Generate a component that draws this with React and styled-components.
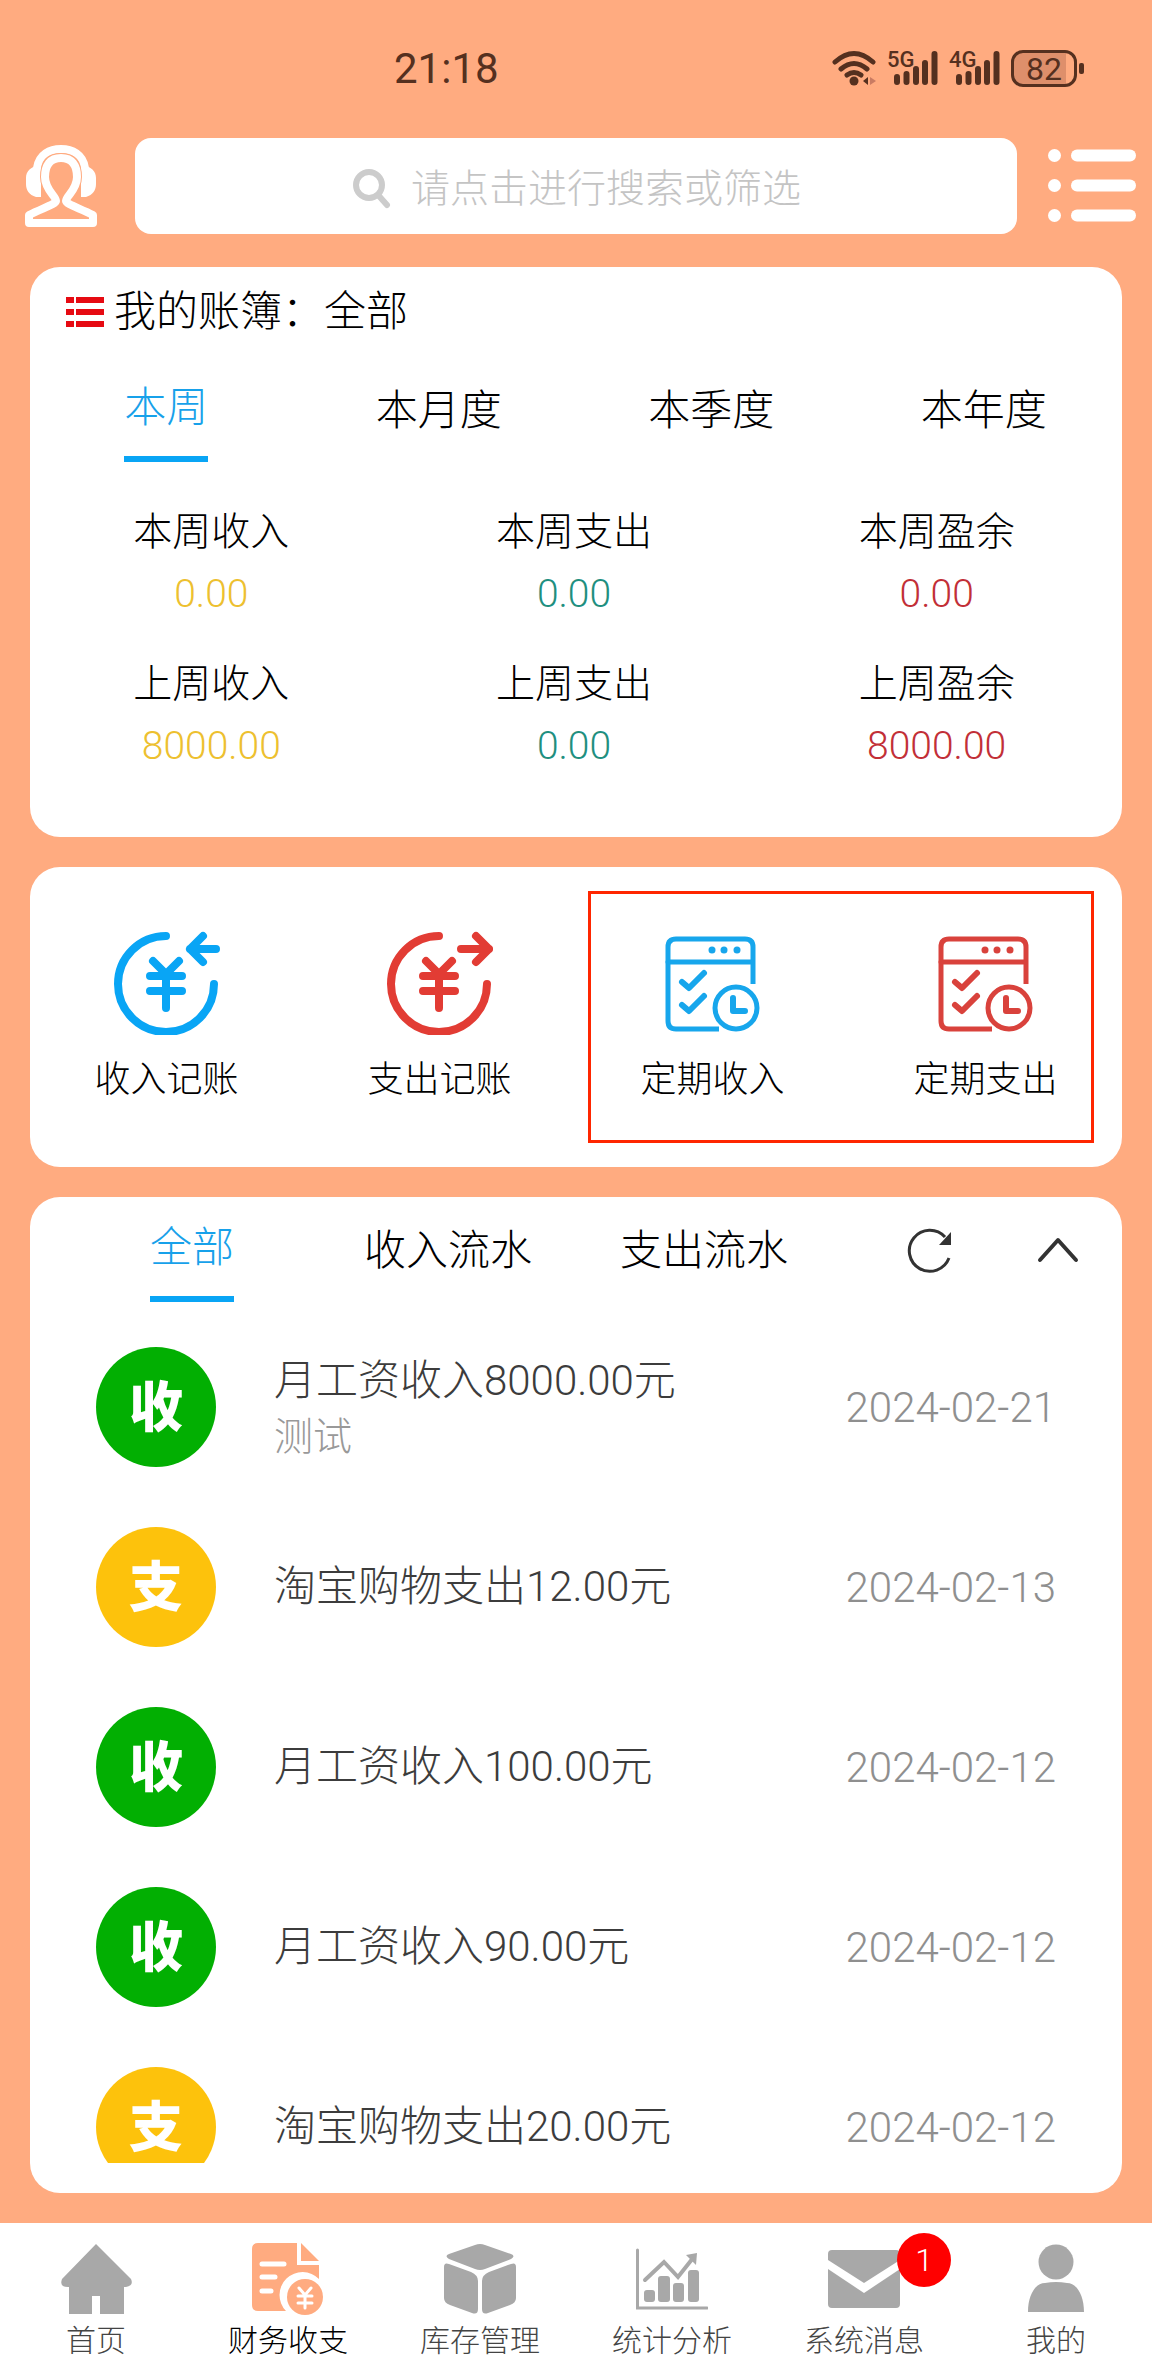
import styled, { createGlobalStyle } from "styled-components";

const GlobalStyle = createGlobalStyle`
  * {
    box-sizing: border-box;
  }
  body {
    margin: 0;
    background: #ffab80;
    color: #000;
    font-family: Roboto, "Noto Sans CJK SC", sans-serif;
    font-weight: 300;
  }
  button, input {
    font: inherit;
    color: inherit;
    border: 0;
    padding: 0;
    background: none;
  }
  svg {
    display: block;
    flex: none;
  }
`;

const Page = styled.div`
  display: flex;
  flex-direction: column;
  min-height: 100vh;
`;

const StatusBar = styled.header`
  display: flex;
  justify-content: space-between;
  align-items: center;
  height: 138px;
  padding: 0 68px 2px 394px;
  color: #55301f;
`;

const Clock = styled.time`
  font-size: 42px;
  font-weight: 400;
`;

const StatusIcons = styled.div`
  display: flex;
  align-items: center;
  gap: 11px;
`;

const Signal = styled.div`
  position: relative;
  padding-left: 7px;
`;

const SignalTag = styled.span`
  position: absolute;
  left: 0;
  top: 0;
  font-size: 22px;
  font-weight: 500;
  line-height: 18px;
`;

const Battery = styled.div`
  display: flex;
  align-items: center;
  gap: 2px;
  &::after {
    content: "";
    width: 5px;
    height: 11px;
    border-radius: 2px;
    background: #55301f;
  }
`;

const BatteryLevel = styled.span`
  width: 66px;
  height: 37px;
  border: 3px solid #55301f;
  border-radius: 12px;
  background: linear-gradient(to right, #de8f6b 86%, transparent 86%);
  font-size: 32px;
  font-weight: 400;
  line-height: 32px;
  text-align: center;
`;

const TopBar = styled.div`
  display: flex;
  align-items: center;
  padding: 0 16px 0 24px;
`;

const SearchBox = styled.label`
  display: flex;
  flex: 1;
  align-items: center;
  justify-content: center;
  gap: 20px;
  height: 96px;
  margin: 0 31px 0 37px;
  padding: 6px 0 0 2px;
  border-radius: 16px;
  background: #fff;
`;

const SearchInput = styled.input`
  width: 10em;
  font-size: 39px;
  outline: none;
  &::placeholder {
    color: #c4c4c4;
    opacity: 1;
  }
`;

const IconButton = styled.button`
  display: flex;
  align-items: center;
  justify-content: center;
`;

const Main = styled.main`
  display: flex;
  flex: 1;
  flex-direction: column;
  gap: 30px;
  padding: 33px 30px 30px;
`;

const Card = styled.section`
  position: relative;
  border-radius: 30px;
  background: #fff;
  overflow: hidden;
`;

const BookRow = styled.h1`
  display: flex;
  align-items: center;
  gap: 10px;
  margin: 0;
  padding: 15px 36px 0;
  font-size: 42px;
  font-weight: 300;
  line-height: 60px;
`;

const PeriodTabs = styled.div`
  display: grid;
  grid-template-columns: repeat(4, 1fr);
  height: 124px;
  padding: 36px 2px 0 0;
`;

const Tab = styled.button`
  justify-self: center;
  align-self: start;
  font-size: 42px;
  line-height: 60px;
  padding: ${({ $active }) => ($active ? "0 0 18px" : "3px 0 0")};
  border-bottom: ${({ $active }) => ($active ? "6px solid #09a5f5" : "0")};
  color: ${({ $active }) => ($active ? "#17a1ea" : "#000")};
`;

const Stats = styled.dl`
  display: grid;
  grid-template-columns: repeat(3, 1fr);
  row-gap: 30px;
  margin: 0;
  padding: 36px 4px 61px 0;
  font-size: 39px;
  line-height: 60px;
  text-align: center;
`;

const StatValue = styled.dd`
  margin: 2px 0 0;
  color: ${({ $color }) => $color};
`;

const Actions = styled(Card)`
  display: grid;
  grid-template-columns: repeat(4, 1fr);
  height: 300px;
`;

const Action = styled.button`
  display: flex;
  flex-direction: column;
  align-items: center;
  gap: 18px;
  padding-top: 60px;
  font-size: 36px;
  line-height: 54px;
`;

const Highlight = styled.div`
  position: absolute;
  inset: 24px 28px 24px auto;
  width: 506px;
  border: 3px solid #ff2600;
  pointer-events: none;
`;

const Records = styled(Card)`
  display: flex;
  flex: 1;
  flex-direction: column;
  padding-bottom: 30px;
`;

const RecordTabs = styled.div`
  display: flex;
  height: 120px;
  padding: 21px 0 0 34px;
`;

const RecordFilters = styled.div`
  display: grid;
  flex: 3;
  grid-template-columns: repeat(3, 1fr);
`;

const RecordTools = styled.div`
  display: grid;
  flex: 1;
  grid-template-columns: 1fr 1fr;
  height: 64px;
  margin-left: 34px;
`;

const RecordList = styled.ul`
  flex: 1 1 0;
  margin: 0;
  padding: 0;
  list-style: none;
  overflow: hidden;
`;

const Record = styled.li`
  display: flex;
  align-items: center;
  height: 180px;
  padding: 0 66px;
`;

const Avatar = styled.span`
  width: 120px;
  height: 120px;
  border-radius: 50%;
  background: ${({ $income }) => ($income ? "#02af02" : "#fdc20c")};
  color: #fff;
  font-size: 54px;
  font-weight: 900;
  line-height: 124px;
  text-align: center;
`;

const RecordText = styled.div`
  flex: 1;
  margin-left: 58px;
  color: #3c3c3c;
  font-size: 42px;
  line-height: 60px;
`;

const Note = styled.div`
  color: #999;
  font-size: 39px;
  line-height: 52px;
`;

const RecordDate = styled.time`
  color: #8f8f8f;
  font-size: 42px;
`;

const NavBar = styled.nav`
  display: grid;
  grid-template-columns: repeat(6, 1fr);
  height: 153px;
  background: #fff;
`;

const NavItem = styled.a`
  display: flex;
  flex-direction: column;
  align-items: center;
  gap: 4px;
  padding-top: 20px;
  color: ${({ $active }) => ($active ? "#000" : "#444")};
  font-size: 30px;
  line-height: 44px;
  text-decoration: none;
`;

const NavIcon = styled.span`
  position: relative;
  color: ${({ $active }) => ($active ? "#ffab80" : "#a8a8a8")};
`;

const Badge = styled.span`
  position: absolute;
  top: -10px;
  right: -51px;
  width: 54px;
  height: 54px;
  border-radius: 50%;
  background: #f00;
  color: #fff;
  font-size: 32px;
  line-height: 54px;
  text-align: center;
`;

const WifiIcon = () => (
  <svg width="44" height="36" viewBox="0 0 44 36" fill="none" stroke="currentColor" strokeWidth="5" strokeLinecap="round">
    <path d="M3 12Q22-5 41 12M9 19q13-11 26 0M15 25q7-5 14 0" />
    <circle cx="22" cy="31" r="4.500" fill="currentColor" stroke="none" />
    <path d="M36 27v8l-5-4z" fill="currentColor" stroke="none" />
    <path d="M38 27v8l6-4z" fill="#c97b62" stroke="none" />
  </svg>
);

const SignalIcon = () => (
  <svg width="44" height="34" viewBox="0 0 44 34" stroke="currentColor" strokeWidth="6" strokeLinecap="round">
    <path d="M3 26v5M12.500 23v8M22 18v13M31 12v19M40.500 3v28" />
  </svg>
);

const ServiceIcon = () => (
  <svg width="74" height="84" viewBox="0 0 74 84" fill="none" stroke="#fff">
    <path d="M13 24C15 10 26 5 37 5s22 5 24 19" strokeWidth="8" />
    <path d="M17 22v31h-5C5 51 2 46 2 40v-6c0-7 5-11 11-12zM57 22v31h5c7-2 10-7 10-13v-6c0-7-5-11-11-12z" fill="#fff" stroke="none" />
    <path d="M32 57c0-5-11-11-11-24 0-12 5-19 16-19s16 7 16 19c0 13-11 19-11 24 0 3 13 7 27 14v8H5v-8c14-7 27-11 27-14z" stroke="#ffab80" strokeWidth="10" strokeLinejoin="round" />
    <path d="M32 57c0-5-11-11-11-24 0-12 5-19 16-19s16 7 16 19c0 13-11 19-11 24 0 3 13 7 27 14v8H5v-8c14-7 27-11 27-14z" strokeWidth="8" strokeLinejoin="round" />
  </svg>
);

const SearchIcon = () => (
  <svg width="38" height="42" viewBox="0 0 38 42" fill="none" stroke="#ccc" strokeWidth="6" strokeLinecap="round">
    <circle cx="16" cy="17" r="13" />
    <path d="M26 28l8 9" />
  </svg>
);

const MenuIcon = () => (
  <svg width="88" height="74" viewBox="0 0 88 74" fill="#fff">
    {[0, 30, 60].map((y) => (
      <g key={y}>
        <circle cx="6.500" cy={y + 6.5} r="6.500" />
        <rect x="23" y={y + 0.5} width="65" height="12" rx="6" />
      </g>
    ))}
  </svg>
);

const BookIcon = () => (
  <svg width="38" height="30" viewBox="0 0 38 30" fill="#e60a12">
    {[0, 12, 24].map((y) => (
      <path key={y} d={`M0 ${y}h8v6H0zM10 ${y}h28v6H10z`} />
    ))}
  </svg>
);

const YenIcon = ({ color, out }) => (
  <svg width="106" height="108" viewBox="0 0 106 108" fill="none" stroke={color} strokeWidth="8" strokeLinecap="round" strokeLinejoin="round">
    <path d="M52 9A48 48 0 1 0 100 57" />
    <path d="M39 34l13 13 13-13M52 47v34M36 49h32M36 64h32" />
    <path d={out ? "M74 22h28M89 9l13 13-13 13" : "M102 22H76M89 9L76 22l13 13"} />
  </svg>
);

const PlanIcon = ({ color }) => (
  <svg width="96" height="108" viewBox="0 3 96 108" fill="none" stroke={color} strokeWidth="5" strokeLinecap="round" strokeLinejoin="round">
    <path d="M88 60V23q0-8-8-8H11q-8 0-8 8v74q0 8 8 8h43" strokeLinecap="butt" />
    <path d="M3 38h84" />
    <path d="M17 58l7 6 15-15M17 81l7 6 15-15" strokeWidth="6" />
    <g fill={color} stroke="none">
      <circle cx="47" cy="26" r="3.500" />
      <circle cx="59" cy="26" r="3.500" />
      <circle cx="72" cy="26" r="3.500" />
    </g>
    <circle cx="71" cy="84" r="21" />
    <path d="M68 74v13h12" strokeWidth="6" />
  </svg>
);

const RefreshIcon = () => (
  <svg width="46" height="46" viewBox="0 0 46 46" fill="none" stroke="#333" strokeWidth="3">
    <path d="M42 31A20.500 20.500 0 1 1 38 10" />
    <path d="M44 5v13H32z" fill="#333" stroke="none" />
  </svg>
);

const ChevronIcon = () => (
  <svg width="42" height="26" viewBox="0 0 42 26" fill="none" stroke="#333" strokeWidth="4" strokeLinecap="round" strokeLinejoin="round">
    <path d="M3 23L21 3l18 20" />
  </svg>
);

const HomeIcon = () => (
  <svg width="72" height="72" viewBox="0 0 72 72" fill="currentColor">
    <path d="M36 1L2 36q-3 8 6 8h1v27h23V53h8v18h24V44h2q8-1 5-8z" />
  </svg>
);

const FinanceIcon = () => (
  <svg width="72" height="72" viewBox="0 0 72 72">
    <path d="M6 0h39v22h22v14a22 22 0 0 0-33 32H6q-6 0-6-6V6q0-6 6-6z" fill="currentColor" />
    <path d="M49 0l18 18H49z" fill="currentColor" />
    <circle cx="53" cy="54" r="18" fill="currentColor" />
    <g fill="none" stroke="#fff" strokeLinecap="round">
      <path d="M10 21h22M10 34h13M10 48h9" strokeWidth="5" />
      <path d="M47 45l6 7 6-7M53 52v13M46 53h14M46 60h14" strokeWidth="3" />
    </g>
  </svg>
);

const StockIcon = () => (
  <svg width="72" height="72" viewBox="0 0 72 72" fill="currentColor">
    <path d="M31 2q5-2 10 0l26 9q5 2 0 5L41 26q-5 2-10 0L5 16q-5-3 0-5z" />
    <path d="M5 21l22 8q7 3 7 9v28q0 6-6 4L6 62q-6-2-6-7V24q0-5 5-3zM67 21l-22 8q-7 3-7 9v28q0 6 6 4l22-8q6-2 6-7V24q0-5-5-3z" />
  </svg>
);

const ChartIcon = () => (
  <svg width="72" height="72" viewBox="0 0 72 72" fill="currentColor">
    <path d="M1.500 7v58H71" fill="none" stroke="currentColor" strokeWidth="3" strokeLinecap="round" />
    <path d="M9 37l19-18 14 15 15-19" fill="none" stroke="currentColor" strokeWidth="4" strokeLinecap="round" />
    <path d="M50 12l11-2-1 12z" />
    <rect x="8" y="47" width="11" height="12" rx="3" />
    <rect x="22" y="33" width="12" height="26" rx="3" />
    <rect x="37" y="40" width="11" height="19" rx="3" />
    <rect x="52" y="27" width="11" height="32" rx="3" />
  </svg>
);

const MailIcon = () => (
  <svg width="72" height="72" viewBox="0 0 72 72" fill="currentColor">
    <path d="M4 7h64q4 0 4 4v6L36 40 0 17v-6q0-4 4-4z" />
    <path d="M0 26l36 24 36-24v35q0 4-4 4H4q-4 0-4-4z" />
  </svg>
);

const UserIcon = () => (
  <svg width="72" height="72" viewBox="0 0 72 72" fill="currentColor">
    <circle cx="36" cy="19" r="17.500" />
    <path d="M8 69c0-18 8-29 17-29q11-2 22 0c9 0 17 11 17 29z" />
  </svg>
);

const periods = ["本周", "本月度", "本季度", "本年度"];

const stats = [
  { label: "本周收入", value: "0.00", color: "#edc02f" },
  { label: "本周支出", value: "0.00", color: "#1f8f80" },
  { label: "本周盈余", value: "0.00", color: "#c22f37" },
  { label: "上周收入", value: "8000.00", color: "#edc02f" },
  { label: "上周支出", value: "0.00", color: "#1f8f80" },
  { label: "上周盈余", value: "8000.00", color: "#c22f37" },
];

const records = [
  { title: "月工资收入8000.00元", note: "测试", date: "2024-02-21", income: true },
  { title: "淘宝购物支出12.00元", date: "2024-02-13" },
  { title: "月工资收入100.00元", date: "2024-02-12", income: true },
  { title: "月工资收入90.00元", date: "2024-02-12", income: true },
  { title: "淘宝购物支出20.00元", date: "2024-02-12" },
];

const navItems = [
  { label: "首页", Icon: HomeIcon },
  { label: "财务收支", Icon: FinanceIcon, active: true },
  { label: "库存管理", Icon: StockIcon },
  { label: "统计分析", Icon: ChartIcon },
  { label: "系统消息", Icon: MailIcon, badge: 1 },
  { label: "我的", Icon: UserIcon },
];

export default function App() {
  return (
    <Page>
      <GlobalStyle />
      <StatusBar>
        <Clock>21:18</Clock>
        <StatusIcons>
          <WifiIcon />
          <Signal>
            <SignalTag>5G</SignalTag>
            <SignalIcon />
          </Signal>
          <Signal>
            <SignalTag>4G</SignalTag>
            <SignalIcon />
          </Signal>
          <Battery>
            <BatteryLevel>82</BatteryLevel>
          </Battery>
        </StatusIcons>
      </StatusBar>
      <TopBar>
        <IconButton aria-label="客服">
          <ServiceIcon />
        </IconButton>
        <SearchBox>
          <SearchIcon />
          <SearchInput type="text" aria-label="搜索" placeholder="请点击进行搜索或筛选" />
        </SearchBox>
        <IconButton aria-label="菜单">
          <MenuIcon />
        </IconButton>
      </TopBar>
      <Main>
        <Card>
          <BookRow>
            <BookIcon />
            我的账簿：全部
          </BookRow>
          <PeriodTabs>
            {periods.map((period, i) => (
              <Tab key={period} $active={i === 0}>
                {period}
              </Tab>
            ))}
          </PeriodTabs>
          <Stats>
            {stats.map(({ label, value, color }) => (
              <div key={label}>
                <dt>{label}</dt>
                <StatValue $color={color}>{value}</StatValue>
              </div>
            ))}
          </Stats>
        </Card>
        <Actions>
          <Action>
            <YenIcon color="#09a5f5" />
            收入记账
          </Action>
          <Action>
            <YenIcon color="#e23c34" out />
            支出记账
          </Action>
          <Action>
            <PlanIcon color="#17a6ec" />
            定期收入
          </Action>
          <Action>
            <PlanIcon color="#d9423c" />
            定期支出
          </Action>
          <Highlight />
        </Actions>
        <Records>
          <RecordTabs>
            <RecordFilters>
              <Tab $active>全部</Tab>
              <Tab>收入流水</Tab>
              <Tab>支出流水</Tab>
            </RecordFilters>
            <RecordTools>
              <IconButton aria-label="刷新">
                <RefreshIcon />
              </IconButton>
              <IconButton aria-label="收起">
                <ChevronIcon />
              </IconButton>
            </RecordTools>
          </RecordTabs>
          <RecordList>
            {records.map(({ title, note, date, income }) => (
              <Record key={title}>
                <Avatar $income={income}>{income ? "收" : "支"}</Avatar>
                <RecordText>
                  {title}
                  {note && <Note>{note}</Note>}
                </RecordText>
                <RecordDate>{date}</RecordDate>
              </Record>
            ))}
          </RecordList>
        </Records>
      </Main>
      <NavBar>
        {navItems.map(({ label, Icon, active, badge }) => (
          <NavItem key={label} href="#" $active={active}>
            <NavIcon $active={active}>
              <Icon />
              {badge && <Badge>{badge}</Badge>}
            </NavIcon>
            {label}
          </NavItem>
        ))}
      </NavBar>
    </Page>
  );
}
